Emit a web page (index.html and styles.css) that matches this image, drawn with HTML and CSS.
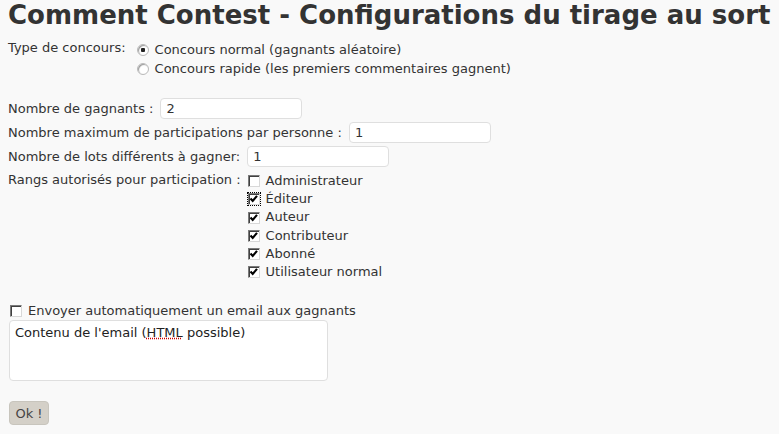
FILE: index.html
```html
<!DOCTYPE html>
<html>
	<head>
		<meta charset="utf-8" />
		<title>Comment Contest</title>
		<link rel="stylesheet" href="styles.css">
	</head>
	<body>
		<h2 class="title">Comment Contest - Configurations du tirage au sort</h2>
		<form class="config">
			<div class="row type">
				<span class="lbl">Type de concours:</span>
				<div class="choices">
					<label class="opt"><input type="radio" name="type" checked> Concours normal (gagnants aléatoire)</label>
					<label class="opt"><input type="radio" name="type"> Concours rapide (les premiers commentaires gagnent)</label>
				</div>
			</div>
			<div class="fields">
				<div class="row"><span class="lbl">Nombre de gagnants :</span><input class="txt" type="text" value="2"></div>
				<div class="row"><span class="lbl">Nombre maximum de participations par personne :</span><input class="txt" type="text" value="1"></div>
				<div class="row"><span class="lbl">Nombre de lots différents à gagner:</span><input class="txt" type="text" value="1"></div>
				<div class="row ranks">
					<span class="lbl">Rangs autorisés pour participation :</span>
					<div class="choices">
						<label class="opt"><input type="checkbox"> Administrateur</label>
						<label class="opt focus"><input type="checkbox" checked> Éditeur</label>
						<label class="opt"><input type="checkbox" checked> Auteur</label>
						<label class="opt"><input type="checkbox" checked> Contributeur</label>
						<label class="opt"><input type="checkbox" checked> Abonné</label>
						<label class="opt"><input type="checkbox" checked> Utilisateur normal</label>
					</div>
				</div>
			</div>
			<label class="opt mail"><input type="checkbox"> Envoyer automatiquement un email aux gagnants</label>
			<div class="area">Contenu de l'email (<span class="typo">HTML</span> possible)</div>
			<button class="ok" type="button">Ok !</button>
		</form>
	</body>
</html>
```
FILE: styles.css
```css
*{margin: 0;padding: 0;}
body{
	background: #f9f9f9;
	color: #333;
	font-family: "DejaVu Sans", Verdana, sans-serif;
	font-size: 13px;
	padding: 0 8px;
}
.title{
	font-size: 26px;
	font-weight: bold;
	line-height: 30px;
	color: #333;
	white-space: nowrap;
}
.config{
	display: flex;
	flex-direction: column;
	align-items: flex-start;
}
.row{
	display: flex;
	align-items: center;
	gap: 7px;
}
.row.type{
	align-items: flex-start;
	margin-top: 10px;
	gap: 11px;
}
.choices{
	display: flex;
	flex-direction: column;
}
.opt{
	display: flex;
	align-items: center;
	gap: 6px;
	line-height: 19px;
}
.fields{
	margin-top: 20px;
	display: flex;
	flex-direction: column;
	gap: 3px;
}
.ranks{
	align-items: flex-start;
	margin-top: 2px;
}
.ranks .opt{
	line-height: 18.2px;
}
input[type=radio],input[type=checkbox]{
	-webkit-appearance: none;
	appearance: none;
	box-sizing: border-box;
	width: 12px;
	height: 12px;
	background: #fff;
	flex: none;
}
input[type=radio]{
	border-radius: 50%;
	border: 1px solid #b9b9b9;
	box-shadow: inset 1px 1px 1px #999;
}
input[type=radio]:checked{
	background: radial-gradient(circle, #222 0 2px, #fff 2.5px);
}
input[type=checkbox]{
	border: 1px solid #7a7a7a;
	border-color: #7a7a7a #d8d8d8 #d8d8d8 #7a7a7a;
	box-shadow: inset 1px 1px 0 #404040;
}
input[type=checkbox]:checked{
	background: #fff url("data:image/svg+xml,%3Csvg xmlns='http://www.w3.org/2000/svg' width='10' height='10'%3E%3Cpath d='M1.5 4.5l2.2 2.4 4.3-5' fill='none' stroke='%23000' stroke-width='2.2'/%3E%3C/svg%3E") no-repeat 0 0;
}
.focus input{
	outline: 1px dotted #000;
	outline-offset: 0;
}
.txt{
	width: 142px;
	height: 21px;
	box-sizing: border-box;
	border: 1px solid #dfdfdf;
	border-radius: 4px;
	background: #fff;
	font: 13px "DejaVu Sans", Verdana, sans-serif;
	color: #333;
	padding: 0 5px;
}
.mail{
	margin-top: 22px;
	margin-left: 2px;
	line-height: 16px;
}
.area{
	margin-top: 1px;
	margin-left: 1px;
	width: 319px;
	height: 61px;
	box-sizing: border-box;
	border: 1px solid #dfdfdf;
	border-radius: 4px;
	background: #fff;
	padding: 4px 5px;
	color: #222;
}
.typo{
	text-decoration: underline dotted #c00;
}
.ok{
	margin-top: 20px;
	margin-left: 1px;
	width: 40px;
	height: 24px;
	border: 1px solid #c8c5bd;
	border-radius: 4px;
	background: #d4d0c8;
	font: 13px "DejaVu Sans", Verdana, sans-serif;
	color: #444;
}
```
